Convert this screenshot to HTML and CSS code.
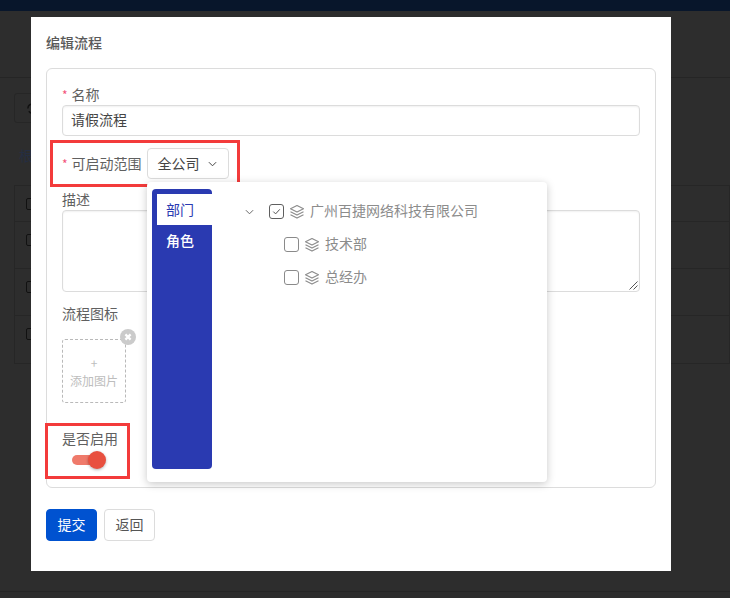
FILE: index.html
```html
<!DOCTYPE html>
<html lang="zh-CN">
<head>
<meta charset="utf-8">
<title>编辑流程</title>
<link rel="stylesheet" href="styles.css">
</head>
<body>
<div class="backdrop">
  <div class="topbar"></div>
  <div class="bg-head"></div>
  <div class="bg-tools">
    <span class="bg-tool">
      <svg viewBox="0 0 14 14" width="13" height="13"><path d="M2 7a5 5 0 0 1 9-3M12 7a5 5 0 0 1-9 3" fill="none" stroke="#111" stroke-width="1.500"/></svg>
    </span>
  </div>
  <div class="bg-crumb">根</div>
  <div class="bg-table">
    <div class="bg-row bg-row-head"><i class="bg-check"></i></div>
    <div class="bg-row"><i class="bg-check"></i></div>
    <div class="bg-row"><i class="bg-check"></i></div>
    <div class="bg-row"><i class="bg-check"></i></div>
  </div>
  <div class="bg-foot"></div>
</div>

<main class="modal">
  <h2 class="title">编辑流程</h2>
  <section class="fieldset">
    <div class="field field-name">
      <label class="label"><span class="req">*</span>名称</label>
      <div class="input">请假流程</div>
    </div>

    <div class="marked marked-scope">
      <label class="label label-inline"><span class="req">*</span>可启动范围</label>
      <div class="select">全公司
        <svg class="chev" viewBox="0 0 10 6" width="9" height="6"><path d="M1 1l4 4 4-4" fill="none" stroke="#444" stroke-width="1.100"/></svg>
      </div>
    </div>

    <div class="field field-desc">
      <label class="label">描述</label>
      <div class="textarea">
        <svg class="grip" viewBox="0 0 9 9" width="9" height="9"><path d="M0.5 8.5L8.5 0.5M4.5 8.5L8.5 4.5" stroke="#555" stroke-width="1" fill="none"/></svg>
      </div>
    </div>

    <div class="field field-icon">
      <label class="label">流程图标</label>
      <div class="upload">
        <span class="plus">+</span>
        <span class="upload-text">添加图片</span>
        <span class="remove"><svg viewBox="0 0 16 16" width="16" height="16"><circle cx="8" cy="8" r="8" fill="#cbcbcb"/><path d="M5.400 5.400l5.200 5.200M10.600 5.400l-5.200 5.200" stroke="#fff" stroke-width="2.200"/></svg></span>
      </div>
    </div>

    <div class="marked marked-switch">
      <label class="label">是否启用</label>
      <div class="switch"><span class="track"></span><span class="knob"></span></div>
    </div>

    <div class="dropdown">
      <nav class="tabs">
        <div class="tab tab-active">部门</div>
        <div class="tab">角色</div>
      </nav>
      <div class="tree">
        <div class="node">
          <svg class="chev chev-tree" viewBox="0 0 10 6" width="9" height="6"><path d="M1 1l4 4 4-4" fill="none" stroke="#666" stroke-width="1.100"/></svg>
          <span class="box box-on"><svg viewBox="0 0 13 13" width="13" height="13"><path d="M3.300 6.600l2.300 2.300 4.200-4.600" fill="none" stroke="#555" stroke-width="1"/></svg></span>
          <svg class="layers" viewBox="0 0 16 16" width="16" height="16"><path d="M8 1.500l6.500 3.300L8 8.100 1.500 4.800z M1.500 7.800L8 11.100l6.500-3.300 M1.500 10.800L8 14.100l6.500-3.300" fill="none" stroke="#8c8c8c" stroke-width="1.100" stroke-linejoin="round"/></svg>
          <span class="node-text">广州百捷网络科技有限公司</span>
        </div>
        <div class="node node-child">
          <span class="box"></span>
          <svg class="layers" viewBox="0 0 16 16" width="16" height="16"><path d="M8 1.500l6.500 3.300L8 8.100 1.500 4.800z M1.500 7.800L8 11.100l6.500-3.300 M1.500 10.800L8 14.100l6.500-3.300" fill="none" stroke="#8c8c8c" stroke-width="1.100" stroke-linejoin="round"/></svg>
          <span class="node-text">技术部</span>
        </div>
        <div class="node node-child">
          <span class="box"></span>
          <svg class="layers" viewBox="0 0 16 16" width="16" height="16"><path d="M8 1.500l6.500 3.300L8 8.100 1.500 4.800z M1.500 7.800L8 11.100l6.500-3.300 M1.500 10.800L8 14.100l6.500-3.300" fill="none" stroke="#8c8c8c" stroke-width="1.100" stroke-linejoin="round"/></svg>
          <span class="node-text">总经办</span>
        </div>
      </div>
    </div>
  </section>
  <div class="actions">
    <button class="btn btn-primary">提交</button>
    <button class="btn">返回</button>
  </div>
</main>
</body>
</html>
```
FILE: styles.css
```css
* { box-sizing: border-box; }
html, body { margin: 0; height: 100%; }
body {
  width: 730px;
  height: 598px;
  overflow: hidden;
  position: relative;
  background: #2d2d2d;
  font-family: "Noto Sans CJK SC", "Noto Sans", sans-serif;
  font-size: 14px;
  color: #606060;
}
.backdrop { height: 598px; display: flex; flex-direction: column; }
.topbar { height: 11px; background: #08162b; flex: none; }
.bg-head { height: 67px; border-bottom: 1px solid #252525; flex: none; }
.bg-tools { height: 45px; padding: 15px 0 0 14px; flex: none; }
.bg-tool { display: flex; align-items: center; width: 60px; height: 30px; padding-left: 11px; border: 1px solid #262626; border-radius: 3px; }
.bg-crumb { height: 40px; padding: 22px 0 0 19px; font-size: 14px; line-height: 20px; color: #252e42; flex: none; }
.bg-table { margin: 22px 0 0 14px; border: 1px solid #262626; flex: none; }
.bg-row { height: 47px; border-bottom: 1px solid #262626; padding: 12px 0 0 11px; }
.bg-row-head { height: 36px; }
.bg-row:last-child { border-bottom: 0; }
.bg-check { display: block; width: 12px; height: 12px; border: 1px solid #111; border-radius: 2px; }
.bg-foot { margin-top: auto; height: 7px; border-top: 1px solid #262626; }

.modal {
  position: absolute;
  left: 31px;
  top: 17px;
  width: 640px;
  height: 554px;
  background: #fff;
  padding: 15px;
  display: flex;
  flex-direction: column;
}
.title { margin: 0; height: 36px; font-size: 14px; line-height: 21px; font-weight: 500; color: #595959; flex: none; }
.fieldset {
  position: relative;
  flex: none;
  width: 610px;
  height: 420px;
  border: 1px solid #dcdcdc;
  border-radius: 6px;
  padding: 16px 15px 0;
}
.label { display: block; height: 20px; font-size: 14px; line-height: 19px; color: #606060; }
.req { color: #f3537a; margin-right: 4px; font-size: 12px; }
.input {
  height: 31px;
  width: 578px;
  border: 1px solid #dcdcdc;
  box-shadow: inset 0 1px 2px rgba(0,0,0,.06);
  border-radius: 4px;
  padding-left: 8px;
  font-size: 14px;
  line-height: 27px;
  color: #444;
}
.marked { border: 3px solid #f33b3b; display: flex; }
.marked-scope {
  width: 190px;
  height: 47px;
  margin: 4px 0 0 -12px;
  padding-left: 9px;
  align-items: center;
}
.label-inline { white-space: nowrap; }
.select {
  display: flex;
  align-items: center;
  justify-content: space-between;
  margin-left: 5px;
  width: 82px;
  height: 31px;
  border: 1px solid #dcdcdc;
  border-radius: 4px;
  padding: 0 11px 0 10px;
  color: #444;
  font-size: 14px;
  line-height: 27px;
}
.field-desc { margin-top: 3px; }
.textarea {
  position: relative;
  width: 578px;
  height: 82px;
  border: 1px solid #dcdcdc;
  box-shadow: inset 0 1px 2px rgba(0,0,0,.06);
  border-radius: 4px;
}
.grip { position: absolute; right: 1px; bottom: 1px; }
.field-icon { margin-top: 12px; }
.upload {
  position: relative;
  width: 64px;
  height: 64px;
  margin-top: 15px;
  border: 1px dashed #b9b9b9;
  border-radius: 3px;
  display: flex;
  flex-direction: column;
  align-items: center;
  padding-top: 16px;
  color: #bdbdbd;
  font-size: 12px;
}
.plus { line-height: 14px; height: 14px; font-size: 12px; }
.upload-text { line-height: 20px; margin-top: 1px; }
.remove { position: absolute; right: -11px; top: -11px; width: 16px; height: 16px; display: block; }
.remove svg { display: block; }
.marked-switch {
  width: 85px;
  height: 56px;
  margin: 20px 0 0 -17px;
  padding: 3px 0 0 5px;
  flex-direction: column;
  align-items: center;
}
.switch { position: relative; width: 34px; height: 18px; margin: 2px 2px 0 0; }
.track { position: absolute; left: 0; top: 4px; width: 28px; height: 10px; background: #ef7a6b; border-radius: 5px; }
.knob { position: absolute; right: 0; top: 0; width: 18px; height: 18px; border-radius: 50%; background: #e8503f; box-shadow: 0 1px 3px rgba(0,0,0,.3); }

.dropdown {
  position: absolute;
  left: 100px;
  top: 113px;
  width: 400px;
  height: 300px;
  background: #fff;
  border-radius: 4px;
  box-shadow: 0 2px 8px rgba(0,0,0,.22);
  padding: 7px 0 0 5px;
  display: flex;
}
.tabs {
  width: 60px;
  height: 280px;
  background: #2a3ab1;
  border-radius: 4px;
  padding: 5px 0 0 5px;
  flex: none;
}
.tab { height: 31px; padding-left: 9px; font-size: 14px; line-height: 31px; color: #fff; font-weight: 500; }
.tab-active { background: #fff; color: #2a3ab1; font-weight: 400; }
.tree { padding: 15px 0 0 33px; }
.node { display: flex; align-items: center; height: 15px; margin-bottom: 18px; color: #8c8c8c; font-size: 14px; }
.node-child { padding-left: 39px; }
.chev-tree { margin-right: 15px; }
.box { width: 15px; height: 15px; border: 1px solid #8a8a8a; border-radius: 3px; flex: none; }
.box-on { border-color: #5f5f5f; }
.box svg { display: block; }
.layers { margin: 0 5px; flex: none; }
.node-text { white-space: nowrap; line-height: 13px; padding-bottom: 2px; }

.actions { display: flex; gap: 7px; margin-top: 21px; }
.btn {
  width: 51px;
  height: 32px;
  padding: 0 0 3px;
  border: 1px solid #dcdcdc;
  border-radius: 4px;
  background: #fff;
  font: inherit;
  font-size: 14px;
  color: #555;
}
.btn-primary { background: #0052d0; border-color: #0052d0; color: #fff; }
```
